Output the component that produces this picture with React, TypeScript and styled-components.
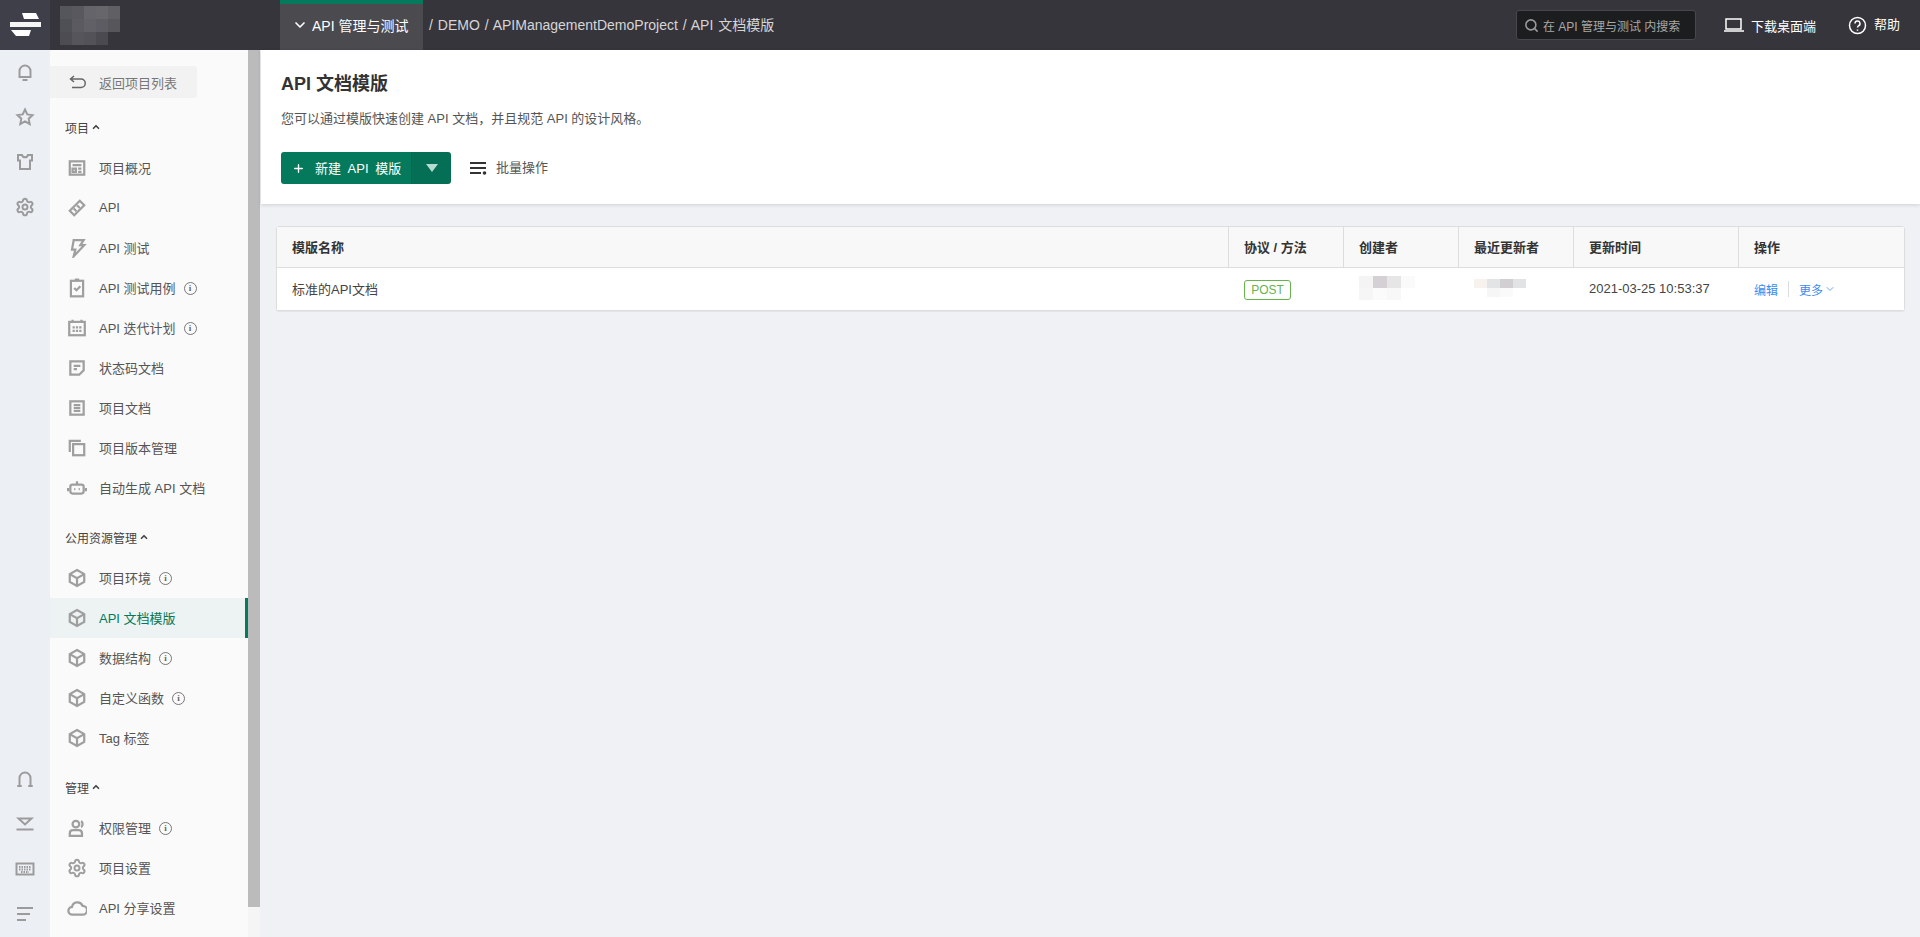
import React from 'react';
import styled, { createGlobalStyle } from 'styled-components';
import { ChevronDown, ChevronUp, Plus, Search, Settings } from 'lucide-react';

const GlobalStyle = createGlobalStyle`
  html, body {
    margin: 0;
    padding: 0;
    height: 100%;
    overflow: hidden;
  }
  body {
    font-family: "Liberation Sans", "Noto Sans CJK SC", sans-serif;
    font-size: 13px;
    color: #333;
  }
  * { box-sizing: border-box; }
`;

const Page = styled.div`
  display: flex;
  flex-direction: column;
  width: 1920px;
  height: 937px;
  background: #f0f1f5;
`;

/* top bar */
const TopBar = styled.header`
  display: flex;
  align-items: center;
  height: 50px;
  flex: none;
  background: #36353b;
  color: #fff;
`;

const LogoBox = styled.div`
  display: flex;
  align-items: center;
  justify-content: center;
  width: 50px;
  height: 50px;
  background: #3f3f49;
`;

const BlurGrid = styled.div<{ $cols: number; $size: number; $h: number }>`
  display: grid;
  grid-template-columns: repeat(${p => p.$cols}, ${p => p.$size}px);
  grid-auto-rows: ${p => p.$h}px;
`;

const BlurCell = styled.span<{ $c: string }>`
  background: ${p => p.$c};
`;

const BrandBlur = styled.div`
  width: 230px;
  padding-left: 10px;
`;

const ActiveTab = styled.div`
  display: flex;
  align-items: center;
  gap: 4px;
  width: 143px;
  height: 50px;
  padding: 0 0 4px 12px;
  background: #4a4a4f;
  border-top: 4px solid #04795b;
  font-size: 14px;
`;

const Crumbs = styled.div`
  margin-left: 6px;
  padding-bottom: 2px;
  color: #d6d6d8;
  font-size: 14px;
  word-spacing: 1px;
`;

const TopRight = styled.div`
  display: flex;
  align-items: center;
  margin-left: auto;
  padding-right: 20px;
`;

const SearchBox = styled.div`
  display: flex;
  align-items: center;
  gap: 4px;
  width: 180px;
  height: 30px;
  padding-left: 7px;
  border: 1px solid #47474d;
  border-radius: 3px;
  background: #1c1d1f;
  color: #a8a8a8;
  font-size: 12px;
`;

const TopLink = styled.div<{ $gap: number; $left: number }>`
  display: flex;
  align-items: center;
  gap: ${p => p.$gap}px;
  margin-left: ${p => p.$left}px;
  font-size: 13px;
`;

const HelpLabel = styled.span`
  padding-bottom: 3px;
`;

/* body */
const Body = styled.div`
  display: flex;
  flex: 1;
  min-height: 0;
`;

const Rail = styled.nav`
  display: flex;
  flex-direction: column;
  justify-content: space-between;
  align-items: center;
  width: 50px;
  flex: none;
  padding: 12px 0 13px;
  background: #ecf0f5;
`;

const RailGroup = styled.div`
  display: flex;
  flex-direction: column;
  gap: 25px;
`;

const RailIcon = styled.svg`
  display: block;
  width: 20px;
  height: 20px;
  fill: none;
  stroke: #9b9b9b;
  stroke-width: 2;
`;

const Sidebar = styled.aside`
  width: 198px;
  flex: none;
  padding-top: 16px;
  background: #fafafa;
`;

const BackButton = styled.div`
  display: flex;
  align-items: center;
  width: 147px;
  height: 32px;
  padding-left: 19px;
  gap: 12px;
  background: #f2f2f2;
  border-radius: 0 3px 3px 0;
  color: #777;
  font-size: 13px;
`;

const Group = styled.section`
  margin-top: 20px;
`;

const GroupTitle = styled.div`
  display: flex;
  align-items: center;
  gap: 2px;
  height: 20px;
  margin-bottom: 10px;
  padding: 0 0 2px 15px;
  color: #444;
  font-size: 12px;
`;

const NavItem = styled.div<{ $active?: boolean }>`
  display: flex;
  align-items: center;
  height: 40px;
  padding-left: 17px;
  color: ${p => (p.$active ? '#04795b' : '#555')};
  background: ${p => (p.$active ? '#edf3f2' : 'transparent')};
  border-right: 3px solid ${p => (p.$active ? '#04795b' : 'transparent')};
  font-size: 13px;
`;

const NavIcon = styled.svg`
  display: block;
  width: 20px;
  height: 20px;
  margin-right: 12px;
  flex: none;
  fill: none;
  stroke: #9f9f9f;
  stroke-width: 2;
`;

const NavLabel = styled.span`
  padding-bottom: 2px;
`;

const InfoMark = styled.span`
  display: inline-flex;
  align-items: center;
  justify-content: center;
  width: 13px;
  height: 13px;
  margin-left: 8px;
  border: 1px solid #777;
  border-radius: 50%;
  color: #666;
  font-family: "Liberation Serif", serif;
  font-size: 9px;
  font-weight: 700;
  line-height: 1;
`;

const ScrollTrack = styled.div`
  width: 12px;
  flex: none;
  background: #f5f5f5;
`;

const ScrollThumb = styled.div`
  height: 857px;
  background: #bbb;
`;

/* main */
const Main = styled.main`
  flex: 1;
  min-width: 0;
  padding-left: 1px;
`;

const HeadPanel = styled.div`
  height: 154px;
  padding: 21px 20px 20px 20px;
  background: #fff;
  box-shadow: 0 1px 4px rgba(0, 0, 0, 0.14);
`;

const Title = styled.h1`
  margin: 0;
  color: #333;
  font-size: 18px;
  font-weight: 700;
  line-height: 26px;
`;

const Sub = styled.p`
  margin: 12px 0 0;
  color: #555;
  font-size: 13px;
  line-height: 20px;
`;

const Actions = styled.div`
  display: flex;
  align-items: center;
  margin-top: 23px;
`;

const SplitButton = styled.div`
  display: flex;
  width: 170px;
  height: 32px;
  border-radius: 3px;
  overflow: hidden;
  color: #fff;
  font-size: 13px;
`;

const MainPart = styled.div`
  display: flex;
  align-items: center;
  gap: 10px;
  width: 130px;
  padding-left: 11px;
  background: #04795b;
  word-spacing: 3px;
`;

const ButtonLabel = styled.span`
  padding-bottom: 2px;
`;

const CaretPart = styled.div`
  display: flex;
  align-items: center;
  justify-content: center;
  flex: 1;
  background: #046f54;
  border-left: 1px solid #04694f;
`;

const Caret = styled.span`
  width: 0;
  height: 0;
  border-left: 6px solid transparent;
  border-right: 6px solid transparent;
  border-top: 8px solid #b6dcd2;
`;

const Batch = styled.div`
  display: flex;
  align-items: center;
  gap: 9px;
  margin-left: 19px;
  color: #555;
  font-size: 13px;
`;

const BatchLabel = styled.span`
  padding-bottom: 4px;
`;

const TableCard = styled.div`
  margin: 22px 15px 0;
  border: 1px solid #ddd;
  border-radius: 3px;
  background: #fff;
  box-shadow: 0 1px 1px rgba(0, 0, 0, 0.06);
`;

const TableRow = styled.div<{ $head?: boolean }>`
  display: grid;
  grid-template-columns: 951px 115px 115px 115px 165px 1fr;
  height: ${p => (p.$head ? 41 : 42)}px;
  background: ${p => (p.$head ? '#f8f8f8' : '#fff')};
  border-bottom: ${p => (p.$head ? '1px solid #ddd' : 'none')};
`;

const HeadCell = styled.div`
  display: flex;
  align-items: center;
  padding: 0 0 2px 15px;
  border-left: 1px solid #ddd;
  color: #333;
  font-size: 13px;
  font-weight: 700;
  &:first-child {
    padding-left: 15px;
    border-left: none;
  }
`;

const Cell = styled.div`
  display: flex;
  align-items: center;
  padding: 0 0 2px 16px;
  color: #444;
  font-size: 13px;
  &:first-child {
    padding-left: 15px;
  }
`;

const Tag = styled.span`
  display: inline-flex;
  align-items: center;
  justify-content: center;
  width: 47px;
  height: 20px;
  margin-top: 4px;
  border: 1px solid #67b34d;
  border-radius: 3px;
  color: #67b34d;
  font-size: 12px;
`;

const TextLink = styled.span`
  margin-top: 2px;
  color: #3b8cf0;
  font-size: 12px;
`;

const LinkDivider = styled.span`
  width: 1px;
  height: 16px;
  margin: 2px 10px 0;
  background: #ddd;
`;

const MoreLink = styled(TextLink)`
  display: inline-flex;
  align-items: center;
  gap: 1px;
`;

const icons: Record<string, React.ReactNode> = {
  bell: (
    <>
      <path d="M4.500 15V9a5.500 5.500 0 0 1 11 0v6z" />
      <path d="M7.500 18h5" />
    </>
  ),
  star: <path d="M10 2.500l2.300 4.900 5.200.7-3.800 3.600 1 5.300-4.700-2.600L5.300 17l1-5.300L2.500 8.100l5.200-.7z" />,
  shirt: <path d="M3 3h4c.3 1.500 1.300 2.300 3 2.300s2.700-.8 3-2.300h4v5.500h-2V17H5V8.500H3z" />,
  gear: <Settings size={20} color="#9b9b9b" strokeWidth={2.4} />,
  headset: (
    <>
      <path d="M4.500 16V9a5.500 5.500 0 0 1 11 0v7" />
      <path d="M3 17h3M14 17h3" strokeLinecap="round" />
    </>
  ),
  download: (
    <>
      <path d="M3.500 4.500h13L10 10.500z" />
      <path d="M1.500 15.500h17" />
    </>
  ),
  keyboard: (
    <>
      <rect x="1.500" y="4.500" width="17" height="11" />
      <path d="M4 8h12M4 10.500h12M6 13h8" strokeDasharray="1.500 1" />
    </>
  ),
  lines: <path d="M2 4h16M2 10h13M2 16h9" />,
  overview: (
    <>
      <rect x="2.500" y="3" width="13" height="12" />
      <path d="M5 6.500h8M5 9.500h3v3H5zM10 9.500h3M10 12.500h3" />
    </>
  ),
  ruler: (
    <>
      <path d="M2.500 11.500l9-9 4 4-9 9z" />
      <path d="M6 9.500l2.500 2.500M9 6.500l2.500 2.500" />
    </>
  ),
  bolt: <path d="M6 2h9l-3 4.500h3.500L6 16.500l1.500-6H4.500z" />,
  clipboard: (
    <>
      <rect x="3.500" y="2.500" width="11" height="14" />
      <path d="M7 1.500h4M6.500 9l2 2 3.500-3.500" />
    </>
  ),
  calendar: (
    <>
      <rect x="2" y="3.500" width="14" height="12" />
      <path d="M5 1.500v2M13 1.500v2M5 8.500h8M5 11.500h8" strokeDasharray="2 1" />
    </>
  ),
  note: <path d="M3 3h12v8l-4 4H3zM6 7h6M6 10h3" />,
  doc: (
    <>
      <rect x="3" y="3" width="12" height="12" />
      <path d="M6 6.500h6M6 9h6M6 11.500h6" />
    </>
  ),
  copies: (
    <>
      <path d="M12.500 2.500H2.500v10" />
      <rect x="5.500" y="5.500" width="10" height="10" />
    </>
  ),
  robot: (
    <>
      <rect x="3" y="6" width="12" height="8" rx="2" />
      <path d="M9 3v3M1 9v3M17 9v3M6.500 10h1M10.500 10h1" />
    </>
  ),
  box: <path d="M9 1.800l6.500 3.700v7L9 16.200l-6.500-3.700v-7zM2.500 5.500L9 9.200l6.500-3.700M9 9.200v7" />,
  user: (
    <>
      <circle cx="8" cy="5.500" r="3" />
      <path d="M2.500 16v-2c0-2 1.500-3 3-3h5c1.500 0 3 1 3 3v2zM12.500 3c2 .5 2 4.500 0 5" />
    </>
  ),
  cog: <Settings size={18} color="#9f9f9f" strokeWidth={2.4} />,
  cloud: <path d="M5 15a3.500 3.500 0 0 1-.5-7A5 5 0 0 1 14 7a4 4 0 0 1 0 8z" />,
};

type Item = { icon: string; label: string; info?: boolean; active?: boolean };

const groups: { title: string; items: Item[] }[] = [
  {
    title: '项目',
    items: [
      { icon: 'overview', label: '项目概况' },
      { icon: 'ruler', label: 'API' },
      { icon: 'bolt', label: 'API 测试' },
      { icon: 'clipboard', label: 'API 测试用例', info: true },
      { icon: 'calendar', label: 'API 迭代计划', info: true },
      { icon: 'note', label: '状态码文档' },
      { icon: 'doc', label: '项目文档' },
      { icon: 'copies', label: '项目版本管理' },
      { icon: 'robot', label: '自动生成 API 文档' },
    ],
  },
  {
    title: '公用资源管理',
    items: [
      { icon: 'box', label: '项目环境', info: true },
      { icon: 'box', label: 'API 文档模版', active: true },
      { icon: 'box', label: '数据结构', info: true },
      { icon: 'box', label: '自定义函数', info: true },
      { icon: 'box', label: 'Tag 标签' },
    ],
  },
  {
    title: '管理',
    items: [
      { icon: 'user', label: '权限管理', info: true },
      { icon: 'cog', label: '项目设置' },
      { icon: 'cloud', label: 'API 分享设置' },
    ],
  },
];

const brandBlur = [
  '#55555c', '#58585e', '#64646a', '#66666b', '#5f5f64',
  '#4f4f56', '#5a5a60', '#606066', '#5c5c62', '#56565b',
  '#4c4c52', '#55555b', '#525258', '#4b4a51', '#36353b',
];
const creatorBlur = ['#f4f4f4', '#d4d0d3', '#e6e6e6', '#fafafa', '#f6f6f6', '#fbfbfb', '#f8f8f8', '#ffffff'];
const updaterBlur = ['#f8f2ee', '#e2e4e6', '#d2cfd3', '#e2e3e5', '#ffffff', '#f6f6f6', '#fafafa', '#ffffff'];

const Logo = () => (
  <svg width="32" height="26" viewBox="0 0 32 26" fill="#fff">
    <path d="M13 1h14l3 6H15z" />
    <path d="M1 10h31v5H1z" opacity="0.95" />
    <path d="M2 18h20l-2 6H7z" />
  </svg>
);

const RailGlyph = ({ name }: { name: string }) => <RailIcon viewBox="0 0 20 20">{icons[name]}</RailIcon>;

export default function App() {
  return (
    <>
      <GlobalStyle />
      <Page>
        <TopBar>
          <LogoBox>
            <Logo />
          </LogoBox>
          <BrandBlur>
            <BlurGrid $cols={5} $size={12} $h={13}>
              {brandBlur.map((c, i) => (
                <BlurCell key={i} $c={c} />
              ))}
            </BlurGrid>
          </BrandBlur>
          <ActiveTab>
            <ChevronDown size={16} strokeWidth={2.5} />
            API 管理与测试
          </ActiveTab>
          <Crumbs>/ DEMO / APIManagementDemoProject / API 文档模版</Crumbs>
          <TopRight>
            <SearchBox>
              <Search size={15} color="#9a9a9a" strokeWidth={2.5} />
              在 API 管理与测试 内搜索
            </SearchBox>
            <TopLink $gap={7} $left={28}>
              <svg width="20" height="14" viewBox="0 0 20 14" fill="none" stroke="#fff" strokeWidth="1.500">
                <path d="M2 1h15v10H2zM0 13h20" />
              </svg>
              下载桌面端
            </TopLink>
            <TopLink $gap={7} $left={32}>
              <svg width="19" height="19" viewBox="0 0 19 19" fill="none" stroke="#fff" strokeWidth="1.500">
                <circle cx="9.500" cy="9.500" r="8" />
                <path d="M7 7.500a2.500 2.500 0 1 1 3.500 2.300c-.8.400-1 .8-1 1.700M9.500 13.500v1.200" />
              </svg>
              <HelpLabel>帮助</HelpLabel>
            </TopLink>
          </TopRight>
        </TopBar>
        <Body>
          <Rail>
            <RailGroup>
              <RailGlyph name="bell" />
              <RailGlyph name="star" />
              <RailGlyph name="shirt" />
              <RailGlyph name="gear" />
            </RailGroup>
            <RailGroup>
              <RailGlyph name="headset" />
              <RailGlyph name="download" />
              <RailGlyph name="keyboard" />
              <RailGlyph name="lines" />
            </RailGroup>
          </Rail>
          <Sidebar>
            <BackButton>
              <svg width="18" height="14" viewBox="0 0 18 14" fill="none" stroke="#666" strokeWidth="1.500">
                <path d="M5 1L1.500 4 5 7M2 4h10a4 4 0 0 1 0 8.500H3" />
              </svg>
              返回项目列表
            </BackButton>
            {groups.map(group => (
              <Group key={group.title}>
                <GroupTitle>
                  {group.title}
                  <ChevronUp size={10} strokeWidth={4} />
                </GroupTitle>
                {group.items.map(item => (
                  <NavItem key={item.label} $active={item.active}>
                    <NavIcon viewBox="0 0 18 18">{icons[item.icon]}</NavIcon>
                    <NavLabel>{item.label}</NavLabel>
                    {item.info && <InfoMark>i</InfoMark>}
                  </NavItem>
                ))}
              </Group>
            ))}
          </Sidebar>
          <ScrollTrack>
            <ScrollThumb />
          </ScrollTrack>
          <Main>
            <HeadPanel>
              <Title>API 文档模版</Title>
              <Sub>您可以通过模版快速创建 API 文档，并且规范 API 的设计风格。</Sub>
              <Actions>
                <SplitButton>
                  <MainPart>
                    <Plus size={13} strokeWidth={2.5} />
                    <ButtonLabel>新建 API 模版</ButtonLabel>
                  </MainPart>
                  <CaretPart>
                    <Caret />
                  </CaretPart>
                </SplitButton>
                <Batch>
                  <svg width="17" height="14" viewBox="0 0 17 14" fill="#333">
                    <path d="M0 1h16v2H0zM0 6h16v2H0zM0 11h11v2H0z" />
                    <circle cx="14.500" cy="12" r="1.800" />
                  </svg>
                  <BatchLabel>批量操作</BatchLabel>
                </Batch>
              </Actions>
            </HeadPanel>
            <TableCard>
              <TableRow $head>
                <HeadCell>模版名称</HeadCell>
                <HeadCell>协议 / 方法</HeadCell>
                <HeadCell>创建者</HeadCell>
                <HeadCell>最近更新者</HeadCell>
                <HeadCell>更新时间</HeadCell>
                <HeadCell>操作</HeadCell>
              </TableRow>
              <TableRow>
                <Cell>标准的API文档</Cell>
                <Cell>
                  <Tag>POST</Tag>
                </Cell>
                <Cell>
                  <BlurGrid $cols={4} $size={14} $h={12}>
                    {creatorBlur.map((c, i) => (
                      <BlurCell key={i} $c={c} />
                    ))}
                  </BlurGrid>
                </Cell>
                <Cell>
                  <BlurGrid $cols={4} $size={13} $h={9}>
                    {updaterBlur.map((c, i) => (
                      <BlurCell key={i} $c={c} />
                    ))}
                  </BlurGrid>
                </Cell>
                <Cell>2021-03-25 10:53:37</Cell>
                <Cell>
                  <TextLink>编辑</TextLink>
                  <LinkDivider />
                  <MoreLink>
                    更多
                    <ChevronDown size={12} strokeWidth={1.5} />
                  </MoreLink>
                </Cell>
              </TableRow>
            </TableCard>
          </Main>
        </Body>
      </Page>
    </>
  );
}
